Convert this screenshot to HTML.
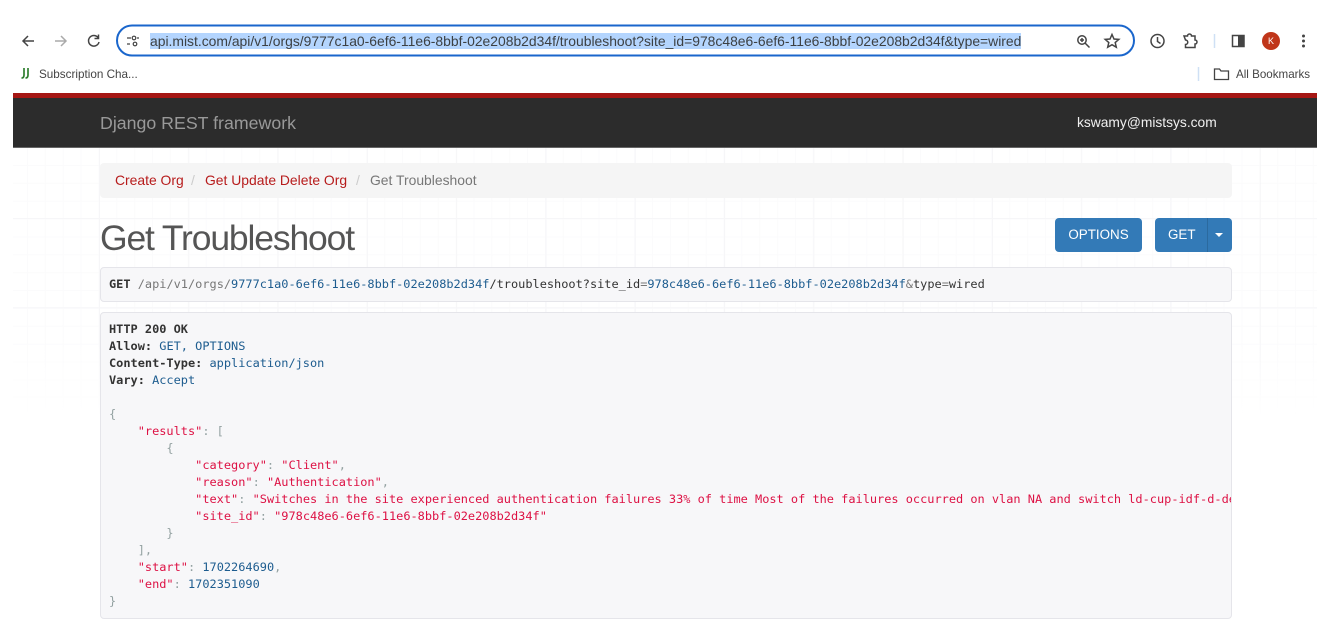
<!DOCTYPE html>
<html><head><meta charset="utf-8"><style>
*{box-sizing:border-box}
html,body{margin:0;padding:0;width:1332px;height:636px;overflow:hidden;background:#fff;font-family:"Liberation Sans",sans-serif}
.a{position:absolute;white-space:pre}
#grid{position:absolute;left:13px;top:148px;width:1304px;height:270px;
background-image:linear-gradient(90deg,#f6f6f8 1px,transparent 1px),linear-gradient(#f6f6f8 1px,transparent 1px),linear-gradient(90deg,#fbfbfc 1px,transparent 1px),linear-gradient(#fbfbfc 1px,transparent 1px);
background-size:89.3px 100%,100% 89.3px,17.86px 100%,100% 17.86px;
background-position:86px 0,0 70px,14px 0,0 17px;
-webkit-mask-image:linear-gradient(#000 70%,transparent 100%)}
.mono{font-family:"DejaVu Sans Mono","Liberation Mono",monospace;font-size:11.93px;line-height:17px;color:#333}
.b{font-weight:bold;color:#333}.bl{color:#1d5c8f}.r{color:#dd1144}.g{color:#93a1a1}.p{color:#777}
.btn{position:absolute;background:#337ab7;border-radius:4px;color:#fff;font-size:13.4px;line-height:33px;text-align:center;height:34px;top:218px}
.crumb{position:absolute;top:172px;font-size:13.9px;line-height:17px;white-space:pre}
</style></head><body>
<svg class="a" style="left:0;top:0" width="1332" height="85" fill="none" stroke="#444" stroke-width="1.5">
<path d="M34 41H23M28 36l-5 5 5 5"/>
<path d="M66 41H55M61 36l5 5-5 5" stroke="#aaa"/>
<path d="M98 37.5A5.3 5.3 0 1 0 99 42M98.500 34.500v4h-4"/>
<rect x="117" y="25.500" width="1017" height="30" rx="15" stroke="#1a66cc" stroke-width="2"/>
<path d="M127 38h4M137 38h2M127 44h3" stroke-width="1.300"/><circle cx="134" cy="38" r="1.800" stroke-width="1.200"/><circle cx="135" cy="44" r="1.800" stroke-width="1.200"/>
<circle cx="1082" cy="40" r="4.200" stroke-width="1.500"/><path d="M1085 43l4.500 4.500M1080 40h4M1082 38v4" stroke-width="1.500"/>
<path d="M1112 34.500l2 4.500 4.800.4-3.600 3.100 1.100 4.700-4.300-2.500-4.300 2.500 1.100-4.700-3.600-3.100 4.800-.4z" stroke-width="1.500"/>
<circle cx="1157.500" cy="41" r="6.500"/><path d="M1157.500 37v4.500l3 2"/>
<path d="M1184 36h3.500a2 2 0 0 1 4 0h3.500v4a2 2 0 0 1 0 4v3.500h-9.500v-3a2 2 0 0 0 0-4.500z"/>
<path d="M1214.500 34v14" stroke="#cfe0f5" stroke-width="1.500"/>
<rect x="1232.500" y="35.500" width="11.500" height="11" stroke-width="1.500"/><rect x="1238" y="35.500" width="6" height="11" fill="#444" stroke="none"/>
<circle cx="1271" cy="41" r="9" fill="#c0361a" stroke="none"/>
<g fill="#444" stroke="none"><circle cx="1303.500" cy="36" r="1.500"/><circle cx="1303.500" cy="41" r="1.500"/><circle cx="1303.500" cy="46" r="1.500"/></g>
<path d="M1198.500 67v14" stroke="#cfe0f5" stroke-width="1.500"/>
<path d="M1214.500 79.500V69h5l1.500 2h7.500v8.500z" stroke-width="1.300"/>
<path d="M24 68v7q0 3-2.500 3M28 68v7q0 3-2.500 3" stroke="#2f7f2f" stroke-width="1.700"/>
</svg>
<div class="a" style="left:150px;top:33px;width:871px;height:16px;background:#b4d5fe"></div>
<div class="a" style="left:150px;top:33px;font-size:13.9px;line-height:16px;color:#3c4043">api.mist.com/api/v1/orgs/9777c1a0-6ef6-11e6-8bbf-02e208b2d34f/troubleshoot?site_id=978c48e6-6ef6-11e6-8bbf-02e208b2d34f&amp;type=wired</div>
<div class="a" style="left:1266px;top:35px;width:10px;text-align:center;font-size:9px;line-height:12px;color:#fff">K</div>
<div class="a" style="left:39px;top:68px;font-size:11.700px;line-height:14px;color:#444">Subscription Cha...</div>
<div class="a" style="left:1236px;top:68px;font-size:11.600px;line-height:14px;color:#444">All Bookmarks</div>

<div id="grid"></div>
<div class="a" style="left:13px;top:93px;width:1304px;height:55px;background:#2c2c2c;border-top:5px solid #a51714;border-bottom:1px solid #666"></div>
<div class="a" style="left:100px;top:112px;font-size:17.750px;line-height:22px;color:#999">Django REST framework</div>
<div class="a" style="left:1077px;top:114px;font-size:13.800px;line-height:18px;color:#f0f0f0">kswamy@mistsys.com</div>

<div class="a" style="left:100px;top:163px;width:1132px;height:35px;background:#f5f5f5;border-radius:4px"></div>
<div class="crumb" style="left:115px;color:#b71c1c">Create Org</div>
<div class="crumb" style="left:191px;color:#ccc">/</div>
<div class="crumb" style="left:205px;color:#b71c1c">Get Update Delete Org</div>
<div class="crumb" style="left:356px;color:#ccc">/</div>
<div class="crumb" style="left:370px;color:#777">Get Troubleshoot</div>

<div class="a" style="left:100px;top:217px;font-size:35.500px;line-height:42px;color:#555;letter-spacing:-1.150px;font-weight:normal">Get Troubleshoot</div>
<div class="btn" style="left:1055px;width:87px">OPTIONS</div>
<div class="btn" style="left:1155px;width:77px;text-align:left;padding-left:13px">GET</div>
<div class="a" style="left:1207px;top:218px;width:1px;height:34px;background:#2b6a9f"></div>
<div class="a" style="left:1215px;top:233px;border-left:4px solid transparent;border-right:4px solid transparent;border-top:4px solid #fff"></div>

<div class="a" style="left:100px;top:267px;width:1132px;height:35px;background:#f7f7f9;border:1px solid #e5e5ea;border-radius:4px"></div>
<div class="a mono" style="left:109px;top:276px"><span class="b">GET</span> <span class="p">/api/v1/orgs/</span><span class="bl">9777c1a0-6ef6-11e6-8bbf-02e208b2d34f</span>/troubleshoot?site_id<span class="p">=</span><span class="bl">978c48e6-6ef6-11e6-8bbf-02e208b2d34f</span><span class="p">&amp;</span>type<span class="p">=</span>wired</div>

<div class="a" style="left:100px;top:312px;width:1132px;height:307px;background:#f7f7f9;border:1px solid #e5e5ea;border-radius:4px"></div>
<div class="a mono" style="left:109px;top:321px;width:1122px;overflow:hidden"><span class="b">HTTP 200 OK</span>
<span class="b">Allow:</span> <span class="bl">GET, OPTIONS</span>
<span class="b">Content-Type:</span> <span class="bl">application/json</span>
<span class="b">Vary:</span> <span class="bl">Accept</span>

<span class="g">{</span>
    <span class="r">"results"</span><span class="g">: [</span>
        <span class="g">{</span>
            <span class="r">"category"</span><span class="g">:</span> <span class="r">"Client"</span><span class="g">,</span>
            <span class="r">"reason"</span><span class="g">:</span> <span class="r">"Authentication"</span><span class="g">,</span>
            <span class="r">"text"</span><span class="g">:</span> <span class="r">"Switches in the site experienced authentication failures 33% of time Most of the failures occurred on vlan NA and switch ld-cup-idf-d-dev"</span>
            <span class="r">"site_id"</span><span class="g">:</span> <span class="r">"978c48e6-6ef6-11e6-8bbf-02e208b2d34f"</span>
        <span class="g">}</span>
    <span class="g">],</span>
    <span class="r">"start"</span><span class="g">:</span> <span class="bl">1702264690</span><span class="g">,</span>
    <span class="r">"end"</span><span class="g">:</span> <span class="bl">1702351090</span>
<span class="g">}</span></div>
</body></html>
